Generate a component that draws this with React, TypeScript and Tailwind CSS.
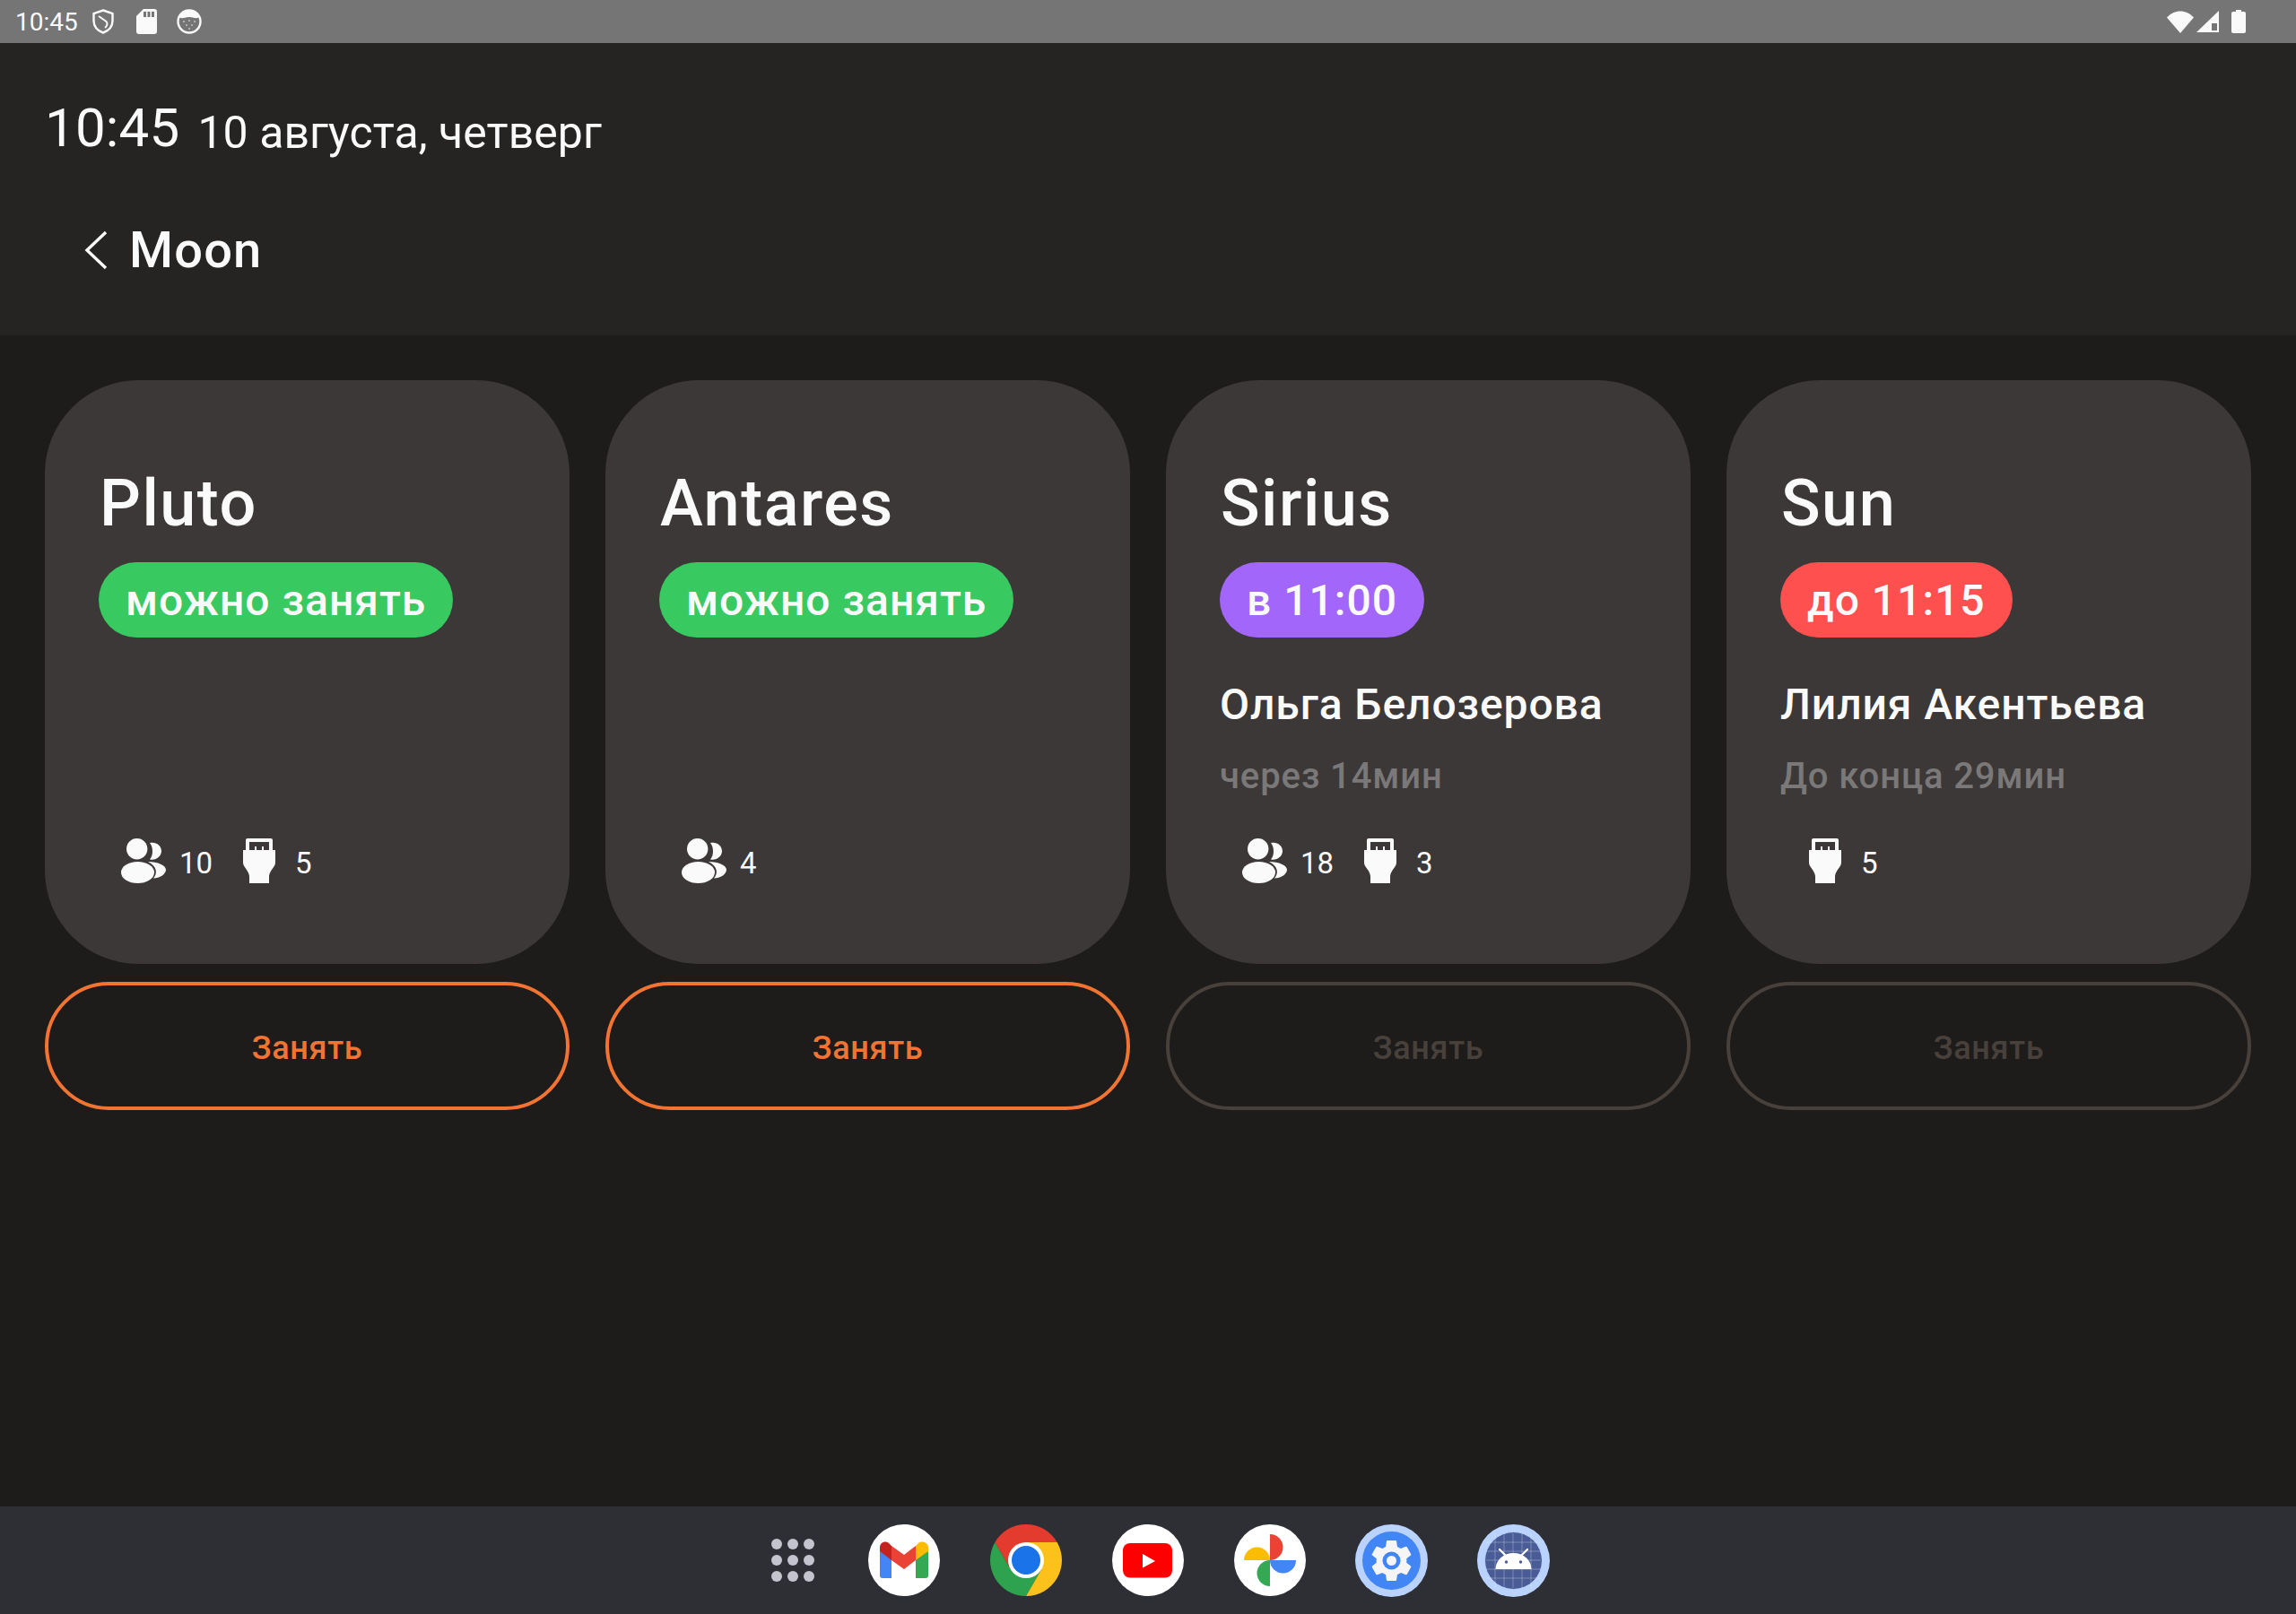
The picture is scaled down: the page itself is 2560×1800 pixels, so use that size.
import React from "react";

const People = () => (
  <svg viewBox="0 0 50 50" className="w-[50px] h-[50px] shrink-0" fill="#fafafa">
    <circle cx="17.7" cy="11.7" r="11.7" />
    <ellipse cx="18.5" cy="38" rx="18.5" ry="12" />
    <path d="M32 5 C39 3.5 45 8 45 14 C45 20 39 25 32 23.5 C36 19 36 10 32 5 Z" />
    <path d="M30 26 C41 26 50 30 50 35 C50 40 43 44.5 36 44.5 C41 39 40 31 30 26 Z" />
  </svg>
);

const Plug = () => (
  <svg viewBox="0 0 50 50" className="w-[50px] h-[50px] shrink-0" fill="#fafafa">
    <path fillRule="evenodd" d="M12 0 H38 A2 2 0 0 1 40 2 V13 H10 V2 A2 2 0 0 1 12 0 Z M14 4 V13 H20 V9 H22 V13 H28 V9 H30 V13 H36 V4 Z" />
    <path d="M7 13 H43 V27 C43 32 37 35 36 42 L36 50 H14 L14 42 C13 35 7 32 7 27 Z" />
  </svg>
);

const Stats = ({ people, plugs }: { people?: number; plugs?: number }) => (
  <div className="flex items-center gap-[27px] pl-[85px]">
    {people !== undefined && (
      <div className="flex items-center gap-[15px]">
        <People />
        <span className="text-[33px] leading-none text-[#fafafa] relative top-[2px]">{people}</span>
      </div>
    )}
    {plugs !== undefined && (
      <div className="flex items-center gap-[15px]">
        <Plug />
        <span className="text-[33px] leading-none text-[#fafafa] relative top-[2px]">{plugs}</span>
      </div>
    )}
  </div>
);

type Room = {
  title: string;
  pill: string;
  pillClass: string;
  name?: string;
  sub?: string;
  people?: number;
  plugs?: number;
  active: boolean;
};

const rooms: Room[] = [
  { title: "Pluto", pill: "можно занять", pillClass: "bg-[#38c960]", people: 10, plugs: 5, active: true },
  { title: "Antares", pill: "можно занять", pillClass: "bg-[#38c960]", people: 4, active: true },
  { title: "Sirius", pill: "в 11:00", pillClass: "bg-[#a366fa]", name: "Ольга Белозерова", sub: "через 14мин", people: 18, plugs: 3, active: false },
  { title: "Sun", pill: "до 11:15", pillClass: "bg-[#ff5050]", name: "Лилия Акентьева", sub: "До конца 29мин", plugs: 5, active: false },
];

const RoomCard = ({ room }: { room: Room }) => (
  <div className="flex flex-col">
    <div className="h-[651px] rounded-[104px] bg-[#3c3837] flex flex-col pt-[96px] pb-[90px]">
      <div className="pl-[61px] text-[72px] leading-[84px] font-medium tracking-[1.5px] text-[#fafafa]">{room.title}</div>
      <div className="pl-[60px] mt-[23px]">
        <span className={`inline-flex h-[84px] items-center rounded-full pl-[30px] pr-[30px] pt-[1px] text-[48px] font-medium tracking-[1px] text-[#fafafa] ${room.pillClass}`}>
          {room.pill}
        </span>
      </div>
      {room.name && (
        <div className="pl-[60px] mt-[47px] text-[48px] leading-[56px] font-medium tracking-[0.9px] text-[#fafafa]">{room.name}</div>
      )}
      {room.sub && (
        <div className="pl-[60px] mt-[28px] text-[40px] leading-[48px] font-medium tracking-[0.9px] text-[#7a7878]">{room.sub}</div>
      )}
      <div className="mt-auto">
        <Stats people={room.people} plugs={room.plugs} />
      </div>
    </div>
    <button
      className={`mt-[20px] h-[143px] rounded-full border-[4px] pt-[4px] text-[36px] font-medium tracking-[0.7px] ${
        room.active ? "border-[#f27432] text-[#f27432]" : "border-[#48403a] text-[#48403a]"
      }`}
    >
      Занять
    </button>
  </div>
);

const StatusBar = () => (
  <div className="h-[48px] bg-[#757575] flex items-center justify-between pl-[17px] pr-[56px] shrink-0">
    <div className="flex items-center">
      <span className="text-[28px] leading-none text-[#fafafa] w-[86px] pt-[2px]">10:45</span>
      <svg viewBox="0 0 24 28" className="w-[24px] h-[28px] ml-[0px]" fill="none" stroke="#fafafa" strokeWidth="2.4">
        <path d="M12 1.5 L22.5 5 V13 C22.5 20 17.5 24.5 12 26.5 C6.5 24.5 1.5 20 1.5 13 V5 Z" />
        <path d="M7 8 L15.5 14 C17.5 16 16.5 19 14 21" strokeWidth="2" />
      </svg>
      <svg viewBox="0 0 23 28" className="w-[23px] h-[28px] ml-[25px]">
        <path fillRule="evenodd" fill="#fafafa" d="M8 0 H20 A3 3 0 0 1 23 3 V25 A3 3 0 0 1 20 28 H3 A3 3 0 0 1 0 25 V8 Z M8 3 V9 H11 V3 Z M12.5 3 V9 H15.5 V3 Z M17 3 V9 H20 V3 Z" />
      </svg>
      <svg viewBox="0 0 28 28" className="w-[28px] h-[28px] ml-[22px]">
        <circle cx="14" cy="14" r="12.5" fill="none" stroke="#fafafa" strokeWidth="2.4" />
        <path d="M3 9 A12 12 0 0 1 25 9 C21 12 20 9 14 9 C8 9 7 12 3 9 Z" fill="#fafafa" />
        <g fill="#fafafa">
          <circle cx="8" cy="14" r="0.8" />
          <circle cx="14" cy="13" r="0.8" />
          <circle cx="20" cy="14" r="0.8" />
          <circle cx="11" cy="18" r="0.8" />
          <circle cx="17" cy="18" r="0.8" />
          <circle cx="14" cy="22" r="0.8" />
        </g>
      </svg>
    </div>
    <div className="flex items-center">
      <svg viewBox="0 0 30 25" className="w-[30px] h-[25px]">
        <path d="M0 7.5 C8.5 -2 21.5 -2 30 7.5 L15 25 Z" fill="#fafafa" />
      </svg>
      <svg viewBox="0 0 25 24" className="w-[25px] h-[24px] ml-[3px]">
        <path fillRule="evenodd" d="M25 0 V24 H0 Z M23 14 H17 V22 H23 Z" fill="#fafafa" />
      </svg>
      <svg viewBox="0 0 16 26" className="w-[16px] h-[26px] ml-[14px]">
        <path d="M5 0 H11 V2 H14 A2 2 0 0 1 16 4 V24 A2 2 0 0 1 14 26 H2 A2 2 0 0 1 0 24 V4 A2 2 0 0 1 2 2 H5 Z" fill="#fafafa" />
      </svg>
    </div>
  </div>
);

const Header = () => (
  <div className="h-[326px] bg-[#252423] shrink-0 text-[#fafafa]">
    <div className="flex items-baseline pl-[50px] pt-[60px]">
      <span className="text-[60px] leading-[70px] tracking-[0.2px]">10:45</span>
      <span className="ml-[20px] text-[50px] leading-[70px] tracking-[0.05px] relative top-[2px]">10 августа, четверг</span>
    </div>
    <div className="flex items-center pl-[94px] mt-[65px]">
      <svg viewBox="0 0 26 44" className="w-[26px] h-[44px]" fill="none" stroke="#fafafa" strokeWidth="3.4">
        <path d="M24 2 L3 22 L24 42" />
      </svg>
      <span className="ml-[24px] text-[56px] leading-[66px] font-medium tracking-[1.2px]">Moon</span>
    </div>
  </div>
);

const Gmail = () => (
  <svg viewBox="0 0 80 80" className="w-[80px] h-[80px]">
    <circle cx="40" cy="40" r="40" fill="#fff" />
    <path d="M13 29 V57 A3 3 0 0 0 16 60 H26 V39 Z" fill="#4285f4" />
    <path d="M53 39 L67 29 V57 A3 3 0 0 1 64 60 H53 Z" fill="#34a853" />
    <path d="M26 24 L40 34 L53 24 V40 L40 50 L26 40 Z" fill="#ea4335" />
    <path d="M13 26 C13 20 19 18 23 21 L26 24 V40 L13 30 Z" fill="#c5221f" />
    <path d="M53 24 L56 21 C60 18 67 20 67 26 V30 L53 40 Z" fill="#fbbc04" />
  </svg>
);

const Chrome = () => (
  <svg viewBox="0 0 80 80" className="w-[80px] h-[80px]">
    <path d="M74.64 20 A40 40 0 0 0 5.36 20 L22.68 50 L40 40 L40 20 Z" fill="#e33b2e" />
    <path d="M5.36 20 A40 40 0 0 0 40 80 L57.32 50 L40 40 L22.68 50 Z" fill="#2fa24f" />
    <path d="M40 80 A40 40 0 0 0 74.64 20 H40 V40 L57.32 50 Z" fill="#fcc11a" />
    <circle cx="40" cy="40" r="20" fill="#fff" />
    <circle cx="40" cy="40" r="16" fill="#1a73e8" />
  </svg>
);

const YouTube = () => (
  <svg viewBox="0 0 80 80" className="w-[80px] h-[80px]">
    <circle cx="40" cy="40" r="40" fill="#fff" />
    <rect x="12" y="21" width="55" height="38.5" rx="8" fill="#ff0000" />
    <path d="M34 33 L48 41 L34 48.5 Z" fill="#fff" />
  </svg>
);

const Photos = () => (
  <svg viewBox="0 0 80 80" className="w-[80px] h-[80px]">
    <circle cx="40" cy="40" r="40" fill="#fff" />
    <path d="M40 11 A14.5 14.5 0 0 1 40 40 Z" fill="#ea4335" />
    <path d="M40 40 H69 A14.5 14.5 0 0 1 40 40 Z" fill="#4285f4" />
    <path d="M40 40 V69 A14.5 14.5 0 0 1 40 40 Z" fill="#34a853" />
    <path d="M11 40 A14.5 14.5 0 0 1 40 40 Z" fill="#fbbc04" />
  </svg>
);

const Settings = () => (
  <svg viewBox="0 0 81 81" className="w-[81px] h-[81px] -ml-[1px]">
    <circle cx="40.5" cy="40.5" r="40.5" fill="#b9d2fe" />
    <circle cx="40.5" cy="40.5" r="32.5" fill="#4285f4" />
    <g transform="translate(13.5 13.5) scale(2.25)">
      <path
        fill="#f5f5f5"
        d="M19.43 12.98c.04-.32.07-.64.07-.98s-.03-.66-.07-.98l2.11-1.65c.19-.15.24-.42.12-.64l-2-3.46c-.12-.22-.39-.3-.61-.22l-2.49 1c-.52-.4-1.08-.73-1.69-.98l-.38-2.65C14.46 2.18 14.25 2 14 2h-4c-.25 0-.46.18-.49.42l-.38 2.65c-.61.25-1.17.59-1.69.98l-2.49-1c-.23-.09-.49 0-.61.22l-2 3.46c-.13.22-.07.49.12.64l2.11 1.65c-.04.32-.07.65-.07.98s.03.66.07.98l-2.11 1.65c-.19.15-.24.42-.12.64l2 3.46c.12.22.39.3.61.22l2.49-1c.52.4 1.08.73 1.69.98l.38 2.65c.03.24.24.42.49.42h4c.25 0 .46-.18.49-.42l.38-2.65c.61-.25 1.17-.59 1.69-.98l2.49 1c.23.09.49 0 .61-.22l2-3.46c.12-.22.07-.49-.12-.64l-2.11-1.65z"
      />
    </g>
    <circle cx="40.5" cy="40.5" r="10" fill="#4285f4" />
    <circle cx="40.5" cy="40.5" r="5.5" fill="#f5f5f5" />
  </svg>
);

const AndroidStudio = () => (
  <svg viewBox="0 0 81 81" className="w-[81px] h-[81px] -ml-[1px]">
    <circle cx="40.5" cy="40.5" r="40.5" fill="#b9d2fe" />
    <circle cx="40.5" cy="40.5" r="32" fill="#4a5c96" />
    <g stroke="#ffffff" strokeOpacity="0.35" strokeWidth="0.8">
      {[20, 30, 40, 50, 60].map((v) => (
        <React.Fragment key={v}>
          <line x1={v} y1="10" x2={v} y2="71" />
          <line x1="10" y1={v} x2="71" y2={v} />
        </React.Fragment>
      ))}
    </g>
    <circle cx="40.5" cy="40.5" r="32" fill="none" stroke="#b9d2fe" strokeWidth="1" />
    <path d="M20.5 50 A20 18 0 0 1 60.5 50 Z" fill="#fff" />
    <path d="M25 28 L31 34 M56 28 L50 34" stroke="#fff" strokeWidth="2.2" strokeLinecap="round" />
    <circle cx="32.5" cy="42" r="1.7" fill="#4a5c96" />
    <circle cx="48.5" cy="42" r="1.7" fill="#4a5c96" />
  </svg>
);

const Dock = () => (
  <div className="h-[120px] bg-[#2e2f35] shrink-0 flex items-center justify-center pl-[28px] gap-[56px]">
    <div className="grid grid-cols-3 gap-[6px] w-[48px] mr-[4px]">
      {Array.from({ length: 9 }).map((_, i) => (
        <div key={i} className="w-[12px] h-[12px] rounded-full bg-[#c4c4cf]" />
      ))}
    </div>
    <Gmail />
    <Chrome />
    <YouTube />
    <Photos />
    <Settings />
    <AndroidStudio />
  </div>
);

export default function App() {
  return (
    <div className="w-[2560px] h-[1800px] flex flex-col bg-[#1d1c1b] font-['Roboto',sans-serif]">
      <StatusBar />
      <Header />
      <main className="flex-1 grid grid-cols-4 gap-x-[40px] px-[50px] pt-[50px] content-start">
        {rooms.map((r) => (
          <RoomCard key={r.title} room={r} />
        ))}
      </main>
      <Dock />
    </div>
  );
}
